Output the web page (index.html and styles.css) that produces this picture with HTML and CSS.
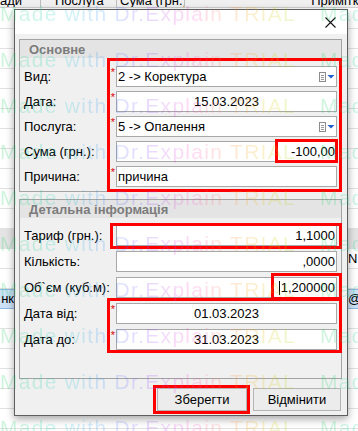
FILE: index.html
```html
<!DOCTYPE html>
<html lang="uk">
<head>
    <meta charset="UTF-8">
    <title>Операція</title>
    <link rel="stylesheet" href="styles.css">
</head>
<body>
    <div class="app">
        <div class="app_head">
            <div class="hcell c1">ади</div>
            <div class="hcell c2">Послуга</div>
            <div class="hcell c3">Сума (грн.)</div>
            <div class="hcell c4">Примітка</div>
        </div>
        <div class="app_list">
            <div class="lrow"></div>
            <div class="lrow"></div>
            <div class="lrow"></div>
            <div class="lrow"></div>
            <div class="lrow"></div>
            <div class="lrow"></div>
            <div class="lrow"></div>
            <div class="lrow"></div>
            <div class="lrow"></div>
            <div class="lrow"></div>
            <div class="lrow"></div>
            <div class="lrow grey"></div>
            <div class="lrow"><span class="lc"></span><span class="rc">N</span></div>
            <div class="lrow"></div>
            <div class="lrow sel"><span class="lc">нк</span><span class="rc">@</span></div>
            <div class="lrow"></div>
            <div class="lrow"></div>
            <div class="lrow"></div>
            <div class="lrow"></div>
            <div class="lrow"></div>
            <div class="lrow"></div>
        </div>
    </div>

    <div class="dialog">
        <div class="dlg_title">
            <svg class="close" width="11" height="11" viewBox="0 0 11 11">
                <path d="M0.5 0.5 L10.5 10.5 M10.5 0.5 L0.5 10.5" stroke="#111" stroke-width="1.1"/>
            </svg>
        </div>
        <div class="dlg_body">
            <section class="group">
                <div class="group_head">Основне</div>
                <div class="group_rows">
                    <div class="frow">
                        <span class="lbl">Вид:</span><span class="req">*</span>
                        <div class="field combo"><span class="val">2 -&gt; Коректура</span>
                            <svg class="drop" width="16" height="10" viewBox="0 0 16 10">
                                <rect x="0.5" y="0.5" width="6" height="9" fill="#fafafa" stroke="#8c8c8c"/>
                                <path d="M2 3.5 H5 M2 5.5 H5 M2 7.5 H5" stroke="#9a9a9a"/>
                                <path d="M8.5 3 H15.5 L12 6.5 Z" fill="#1f5fcf"/>
                            </svg>
                        </div>
                    </div>
                    <div class="frow">
                        <span class="lbl">Дата:</span><span class="req">*</span>
                        <div class="field center">15.03.2023</div>
                    </div>
                    <div class="frow">
                        <span class="lbl">Послуга:</span><span class="req">*</span>
                        <div class="field combo"><span class="val">5 -&gt; Опалення</span>
                            <svg class="drop" width="16" height="10" viewBox="0 0 16 10">
                                <rect x="0.5" y="0.5" width="6" height="9" fill="#fafafa" stroke="#8c8c8c"/>
                                <path d="M2 3.5 H5 M2 5.5 H5 M2 7.5 H5" stroke="#9a9a9a"/>
                                <path d="M8.5 3 H15.5 L12 6.5 Z" fill="#1f5fcf"/>
                            </svg>
                        </div>
                    </div>
                    <div class="frow">
                        <span class="lbl">Сума (грн.):</span><span class="req"></span>
                        <div class="field num">-100,00</div>
                    </div>
                    <div class="frow">
                        <span class="lbl">Причина:</span><span class="req">*</span>
                        <div class="field">причина</div>
                    </div>
                </div>
            </section>

            <section class="group second">
                <div class="group_head">Детальна інформація</div>
                <div class="group_rows">
                    <div class="frow">
                        <span class="lbl">Тариф (грн.):</span><span class="req"></span>
                        <div class="field num">1,1000</div>
                    </div>
                    <div class="frow">
                        <span class="lbl">Кількість:</span><span class="req"></span>
                        <div class="field num">,0000</div>
                    </div>
                    <div class="frow">
                        <span class="lbl">Об`єм (куб.м):</span><span class="req"></span>
                        <div class="field num"><span class="caret"></span>1,200000</div>
                    </div>
                    <div class="frow">
                        <span class="lbl">Дата від:</span><span class="req">*</span>
                        <div class="field center">01.03.2023</div>
                    </div>
                    <div class="frow">
                        <span class="lbl">Дата до:</span><span class="req">*</span>
                        <div class="field center">31.03.2023</div>
                    </div>
                </div>
            </section>

            <div class="buttons">
                <button type="button" class="btn save">Зберегти</button>
                <button type="button" class="btn">Відмінити</button>
            </div>
        </div>
    </div>

    <!-- червоні рамки-виноски -->
    <div class="mark m_main"></div>
    <div class="mark m_sum"></div>
    <div class="mark m_tariff"></div>
    <div class="mark m_volume"></div>
    <div class="mark m_dates"></div>
    <div class="mark m_save"></div>

    <div class="wm">
        <div class="wm_rows">
            <div class="wm_line"><span class="wm_t">Made with Dr.Explain TRIAL</span><span class="wm_t">Made with Dr.Explain TRIAL</span></div>
            <div class="wm_line"><span class="wm_t">Made with Dr.Explain TRIAL</span><span class="wm_t">Made with Dr.Explain TRIAL</span></div>
            <div class="wm_line"><span class="wm_t">Made with Dr.Explain TRIAL</span><span class="wm_t">Made with Dr.Explain TRIAL</span></div>
            <div class="wm_line"><span class="wm_t">Made with Dr.Explain TRIAL</span><span class="wm_t">Made with Dr.Explain TRIAL</span></div>
            <div class="wm_line"><span class="wm_t">Made with Dr.Explain TRIAL</span><span class="wm_t">Made with Dr.Explain TRIAL</span></div>
            <div class="wm_line"><span class="wm_t">Made with Dr.Explain TRIAL</span><span class="wm_t">Made with Dr.Explain TRIAL</span></div>
            <div class="wm_line"><span class="wm_t">Made with Dr.Explain TRIAL</span><span class="wm_t">Made with Dr.Explain TRIAL</span></div>
            <div class="wm_line"><span class="wm_t">Made with Dr.Explain TRIAL</span><span class="wm_t">Made with Dr.Explain TRIAL</span></div>
            <div class="wm_line"><span class="wm_t">Made with Dr.Explain TRIAL</span><span class="wm_t">Made with Dr.Explain TRIAL</span></div>
            <div class="wm_line"><span class="wm_t">Made with Dr.Explain TRIAL</span><span class="wm_t">Made with Dr.Explain TRIAL</span></div>
        </div>
    </div>
</body>
</html>
```

FILE: styles.css
```css
* {
    box-sizing: border-box;
}
body {
    margin: 0;
    width: 358px;
    height: 431px;
    overflow: hidden;
    position: relative;
    background: #fff;
    font-family: "Liberation Sans", Arial, sans-serif;
    font-size: 13px;
    color: #000;
}

/* програма за діалогом */
.app_head {
    display: flex;
    height: 8px;
    overflow: hidden;
    background: #f0f0f0;
    border-bottom: 1px solid #cfcfcf;
}
.hcell {
    line-height: 17px;
    margin-top: -8px;
    white-space: nowrap;
    overflow: hidden;
    border-right: 1px solid #bdbdbd;
}
.c1 { width: 41px; padding-left: 0; }
.c2 { width: 76px; padding-left: 14px; }
.c3 { width: 68px; padding-left: 3px; }
.c4 { flex: 1; text-align: right; border-right: 0; margin-right: -8px; }
.app_list {
    display: flex;
    flex-direction: column;
    padding-top: 1px;
}
.lrow {
    height: 20px;
    border-bottom: 1px solid #e2e2e2;
    display: flex;
    justify-content: space-between;
    line-height: 19px;
}
.lrow.grey {
    background: #e4e4e4;
}
.lrow.sel {
    background: #cde2f7;
    border-top: 1px solid #8fb8e3;
    border-bottom: 1px solid #8fb8e3;
    line-height: 18px;
}
.lc {
    width: 14px;
    overflow: hidden;
    text-align: right;
}
.rc {
    width: 10px;
    overflow: hidden;
}

/* діалог */
.dialog {
    position: absolute;
    left: 14px;
    top: 9px;
    width: 334px;
    height: 407px;
    border: 1px solid #5e5e5e;
    background: #f0f0f0;
    box-shadow: 0 3px 8px rgba(0, 0, 0, 0.35);
}
.dlg_title {
    height: 24px;
    background: #fff;
    display: flex;
    justify-content: flex-end;
    align-items: center;
    padding-right: 11px;
}
.dlg_body {
    padding: 5px 5px 0 4px;
}
.group {
    border: 1px solid #a3a3a3;
    background: #f0f0f0;
}
.group.second {
    margin-top: 7px;
}
.group_head {
    height: 18px;
    line-height: 19px;
    background: #e4e4e4;
    padding-left: 9px;
    font-weight: bold;
    color: #7c7c7c;
}
.group_rows {
    display: flex;
    flex-direction: column;
    gap: 4px;
    padding: 8px 4px 4px 4px;
}
.second .group_rows {
    gap: 5px;
    padding: 7px 4px 28px 4px;
}
.frow {
    display: grid;
    grid-template-columns: 83px 9px 1fr;
    height: 21px;
    align-items: center;
}
.lbl {
    white-space: nowrap;
}
.req {
    align-self: start;
    color: #e00000;
    font-size: 11px;
    line-height: 11px;
    text-align: right;
    padding: 1px 1px 0 0;
}
.field {
    height: 21px;
    border: 1px solid #a8a8a8;
    background: #fff;
    padding: 0 1px;
    display: flex;
    align-items: center;
    white-space: nowrap;
}
.field.num {
    justify-content: flex-end;
}
.field.center {
    justify-content: center;
}
.field.combo {
    justify-content: space-between;
}
.caret {
    width: 1px;
    height: 14px;
    background: #000;
    margin-right: 1px;
}

.buttons {
    display: flex;
    justify-content: flex-end;
    gap: 6px;
    padding: 9px 1px 0 0;
}
.btn {
    height: 23px;
    width: 88px;
    border: 1px solid #b4b4b4;
    background: #ececec;
    font-family: inherit;
    font-size: 13px;
    color: #000;
    padding: 0;
}
.btn.save {
    width: 90px;
}

/* червоні виноски */
.mark {
    position: absolute;
    border: 3px solid #ff0000;
}
.m_main { left: 107px; top: 58px; width: 235px; height: 134px; }
.m_sum { left: 275px; top: 139px; width: 63px; height: 24px; }
.m_tariff { left: 110px; top: 223px; width: 232px; height: 26px; }
.m_volume { left: 271px; top: 273px; width: 71px; height: 27px; }
.m_dates { left: 107px; top: 298px; width: 235px; height: 55px; }
.m_save { left: 153px; top: 385px; width: 97px; height: 29px; }

/* водяний знак */
.wm {
    position: absolute;
    inset: 0;
    pointer-events: none;
    overflow: hidden;
}
.wm_rows {
    margin-top: -9px;
}
.wm_line {
    height: 46px;
    line-height: 46px;
    white-space: nowrap;
    font-family: "Liberation Sans", Arial, sans-serif;
    font-size: 21px;
    letter-spacing: 1.3px;
}
.wm_t {
    display: inline-block;
    width: 320px;
    color: transparent;
    background: linear-gradient(90deg, #10d050 0%, #10d0c0 18%, #3a8cff 33%, #8a4cff 45%, #ff48c8 60%, #ff9a20 75%, #c8d800 88%, #30d040 100%);
    -webkit-background-clip: text;
    background-clip: text;
    opacity: 0.2;
}
```
